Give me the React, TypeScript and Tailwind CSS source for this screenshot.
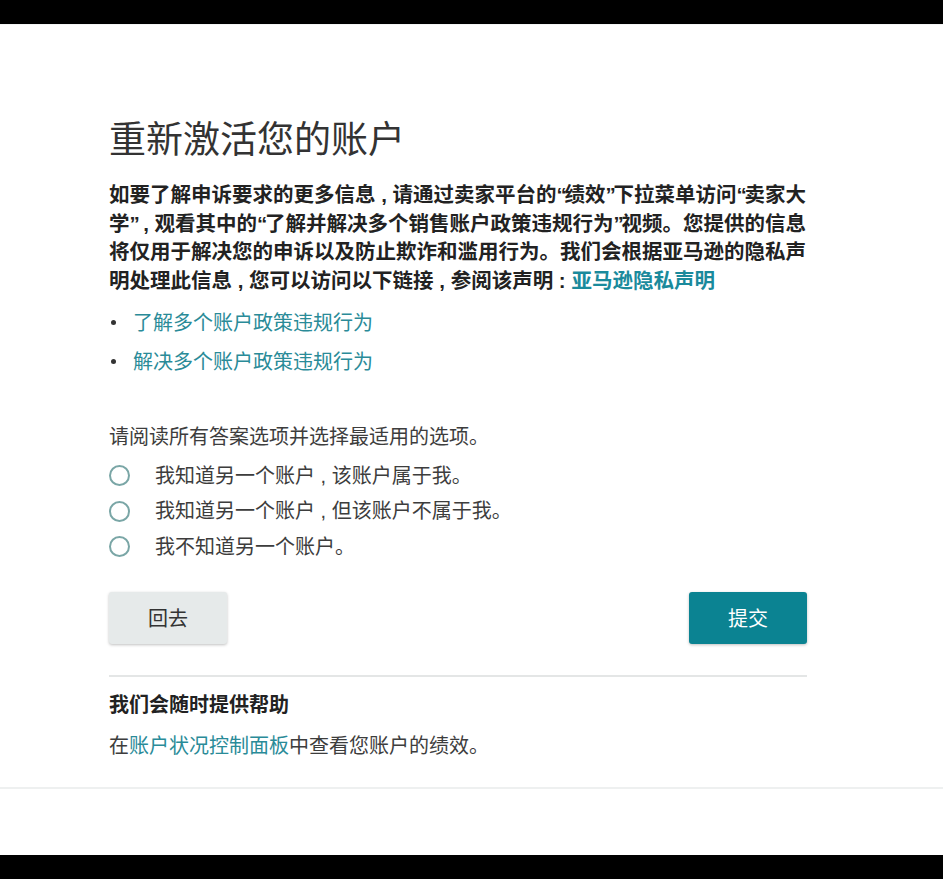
import React from "react";

const font = { fontFamily: '"Noto Sans CJK SC", "Noto Sans", sans-serif' };
const mixed = { fontFamily: '"Liberation Sans", "Noto Sans CJK SC", sans-serif' };

function Line({ children }: { children: React.ReactNode }) {
  return (
    <div className="h-[28.5px] whitespace-nowrap leading-[28.5px]" style={mixed}>
      {children}
    </div>
  );
}

function Q({ ch }: { ch: string }) {
  return <span className="tracking-[-2.3px]">{ch}</span>;
}

function Radio({ label }: { label: React.ReactNode }) {
  return (
    <label className="flex h-[35.5px] items-center">
      <span className="h-[21px] w-[21px] shrink-0 rounded-full border-[2px] border-[#7aa6a6] bg-white" />
      <span className="ml-[25px] h-[28px] whitespace-nowrap text-[20px] leading-[28px] text-[#3d3d3d]" style={mixed}>
        {label}
      </span>
    </label>
  );
}

export default function App() {
  return (
    <div className="flex h-[879px] w-[943px] flex-col bg-black" style={font}>
      <div className="h-[24px] shrink-0 bg-black" />
      <div className="flex h-[831px] flex-col bg-white">
        <div className="h-[1px] w-full bg-[#f3f5f5]" />
        <div className="ml-[109px] mt-[92px] w-[698px]">
          <h1 className="h-[40px] text-[37px] font-normal leading-[40px] text-[#333]">重新激活您的账户</h1>
          <div className="mt-[24px] text-[20.5px] font-bold text-[#222]">
            <Line>
              如要了解申诉要求的更多信息 , 请通过卖家平台的<Q ch="“" />绩效<Q ch="”" />下拉菜单访问<Q ch="“" />卖家大
            </Line>
            <Line>
              学<Q ch="”" /> , 观看其中的<Q ch="“" />了解并解决多个销售账户政策违规行为<Q ch="”" />视频。您提供的信息
            </Line>
            <Line>将仅用于解决您的申诉以及防止欺诈和滥用行为。我们会根据亚马逊的隐私声</Line>
            <Line>
              明处理此信息 , 您可以访问以下链接 , 参阅该声明 : <span className="text-[#1a8a9c]">亚马逊隐私声明</span>
            </Line>
          </div>
          <ul className="mt-[13px] flex flex-col gap-[11px]">
            <li className="flex h-[28px] items-center text-[20px] leading-[28px]">
              <span className="ml-[2px] h-[5px] w-[5px] rounded-full bg-[#333]" />
              <span className="ml-[17px] text-[#2a8b98]">了解多个账户政策违规行为</span>
            </li>
            <li className="flex h-[28px] items-center text-[20px] leading-[28px]">
              <span className="ml-[2px] h-[5px] w-[5px] rounded-full bg-[#333]" />
              <span className="ml-[17px] text-[#2a8b98]">解决多个账户政策违规行为</span>
            </li>
          </ul>
          <p className="mt-[47px] h-[28px] text-[20px] leading-[28px] text-[#3d3d3d]">请阅读所有答案选项并选择最适用的选项。</p>
          <div className="mt-[8px] flex flex-col">
            <Radio label="我知道另一个账户 , 该账户属于我。" />
            <Radio label="我知道另一个账户 , 但该账户不属于我。" />
            <Radio label="我不知道另一个账户。" />
          </div>
          <div className="mt-[27px] flex items-center justify-between">
            <button className="h-[52px] w-[118px] rounded-[3px] bg-[#e6eaea] text-[20px] text-[#333] shadow-[0_1px_3px_rgba(0,0,0,0.25)]">
              回去
            </button>
            <button className="h-[52px] w-[118px] rounded-[3px] bg-[#0b8392] text-[20px] text-white shadow-[0_1px_3px_rgba(0,0,0,0.25)]">
              提交
            </button>
          </div>
          <div className="mt-[31px] h-[2px] w-full bg-[#e4e6e6]" />
          <h2 className="mt-[13px] h-[28px] text-[20px] font-bold leading-[28px] text-[#222]">我们会随时提供帮助</h2>
          <p className="mt-[13px] h-[28px] text-[20px] leading-[28px] text-[#3d3d3d]">
            在<span className="text-[#2a8b98]">账户状况控制面板</span>中查看您账户的绩效。
          </p>
        </div>
        <div className="mt-[28px] h-[2px] w-full bg-[#eef0f0]" />
      </div>
      <div className="h-[24px] shrink-0 bg-black" />
    </div>
  );
}
